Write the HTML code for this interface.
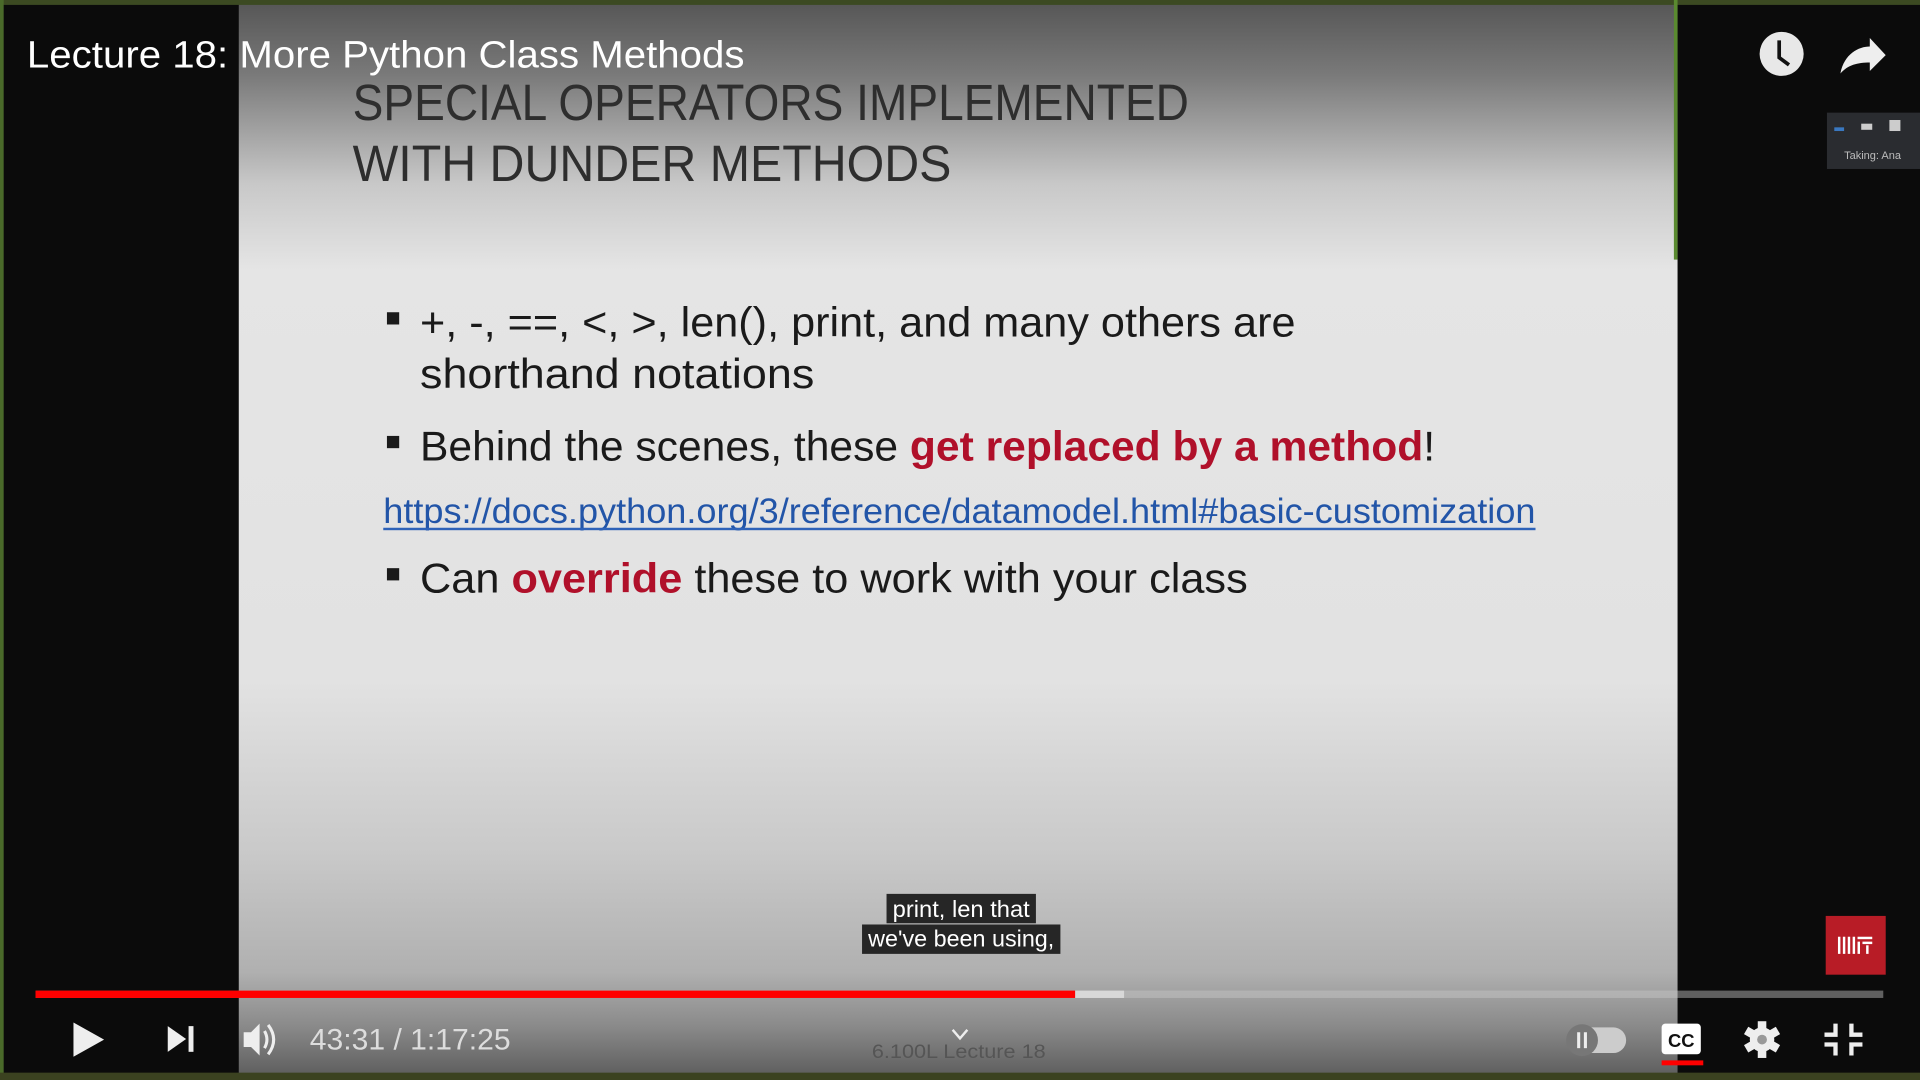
<!DOCTYPE html>
<html><head><meta charset="utf-8"><style>
html,body{margin:0;padding:0;background:#0b0b0b;width:1920px;height:1080px;overflow:hidden}
svg{display:block}
</style></head><body>
<svg width="1920" height="1080" viewBox="0 0 1568 882" xmlns="http://www.w3.org/2000/svg" font-family="Liberation Sans, sans-serif">
<defs>
<linearGradient id="sl" x1="0" y1="0" x2="0" y2="1">
<stop offset="0" stop-color="#555"/>
<stop offset="0.07" stop-color="#7a7a7a"/>
<stop offset="0.17" stop-color="#c8c8c8"/>
<stop offset="0.25" stop-color="#e5e5e5"/>
<stop offset="0.63" stop-color="#e2e2e2"/>
<stop offset="0.79" stop-color="#c9c9c9"/>
<stop offset="0.9" stop-color="#b0b0b0"/>
<stop offset="0.95" stop-color="#8a8a8a"/>
<stop offset="1" stop-color="#5a5a5a"/>
</linearGradient>
</defs>
<rect width="1568" height="882" fill="#0b0b0b"/>
<rect x="195" y="0" width="1175" height="882" fill="url(#sl)"/>
<rect x="0" y="0" width="1568" height="4" fill="#3c4a22"/>
<rect x="0" y="0" width="3" height="882" fill="#4a6a2a"/>
<rect x="0" y="876" width="1568" height="6" fill="#3b4220"/>
<rect x="1367" y="0" width="3" height="212" fill="#5a8a30"/>

<text x="22" y="55" font-size="31" fill="#fff" textLength="586" lengthAdjust="spacingAndGlyphs">Lecture 18: More Python Class Methods</text>

<g fill="#2e2e2e" font-size="42">
<text x="288" y="98" textLength="683" lengthAdjust="spacingAndGlyphs">SPECIAL OPERATORS IMPLEMENTED</text>
<text x="288" y="148" textLength="489" lengthAdjust="spacingAndGlyphs">WITH DUNDER METHODS</text>
</g>
<g fill="#1a1a1a" font-size="34">
<rect x="316" y="255" width="10" height="10"/>
<text x="343" y="275" textLength="715" lengthAdjust="spacingAndGlyphs">+, -, ==, &lt;, &gt;, len(), print, and many others are</text>
<text x="343" y="317" textLength="322" lengthAdjust="spacingAndGlyphs">shorthand notations</text>
<rect x="316" y="356" width="10" height="10"/>
<text x="343" y="376" textLength="829" lengthAdjust="spacingAndGlyphs">Behind the scenes, these <tspan fill="#b0102a" font-weight="bold">get replaced by a method</tspan>!</text>
<rect x="316" y="464" width="10" height="10"/>
<text x="343" y="484" textLength="676" lengthAdjust="spacingAndGlyphs">Can <tspan fill="#b0102a" font-weight="bold">override</tspan> these to work with your class</text>
</g>
<text x="313" y="427" font-size="29" fill="#2255a8" textLength="941" lengthAdjust="spacingAndGlyphs">https://docs.python.org/3/reference/datamodel.html#basic-customization</text>
<rect x="313" y="431" width="941" height="2" fill="#2e62b8"/>

<!-- subtitles -->
<rect x="724" y="730" width="122" height="24" fill="#262626"/>
<rect x="704" y="755" width="162" height="24" fill="#262626"/>
<text x="785" y="749" font-size="19" fill="#fff" text-anchor="middle" textLength="112" lengthAdjust="spacingAndGlyphs">print, len that</text>
<text x="785" y="773" font-size="19" fill="#fff" text-anchor="middle" textLength="152" lengthAdjust="spacingAndGlyphs">we've been using,</text>

<!-- MIT logo -->
<rect x="1491" y="748" width="49" height="48" fill="#b81c26"/>
<g fill="#fff"><rect x="1501" y="765" width="2" height="14"/><rect x="1505" y="765" width="2" height="14"/><rect x="1509" y="765" width="2" height="14"/><rect x="1513" y="765" width="2" height="14"/><rect x="1517" y="769" width="2" height="10"/><rect x="1521" y="769" width="8" height="2"/><rect x="1524" y="772" width="2" height="7"/><rect x="1517" y="765" width="12" height="2"/></g>

<!-- top right icons -->
<circle cx="1455" cy="44" r="18" fill="#e8e8e8"/>
<path d="M1453 33 V47 L1461 53" stroke="#111" stroke-width="3" fill="none"/>
<path d="M1503 60 C1506 44 1518 38 1527 38 V31 L1540 45 L1527 58 V51 C1517 51 1509 53 1503 60 Z" fill="#eee"/>
<rect x="1492" y="92" width="76" height="46" fill="#2a2c30"/>
<rect x="1498" y="104" width="8" height="3" fill="#3a78c0"/><rect x="1520" y="101" width="9" height="5" fill="#ccc"/><rect x="1543" y="98" width="9" height="9" fill="#ccc"/>
<text x="1506" y="130" font-size="9" fill="#bbb">Taking: Ana</text>

<!-- progress -->
<rect x="29" y="809" width="1509" height="6" fill="rgba(200,200,200,0.45)"/>
<rect x="878" y="809" width="40" height="6" fill="#d8d8d8"/>
<rect x="29" y="809" width="849" height="6" fill="#f00"/>

<!-- controls -->
<path d="M60 835 L85 849 L60 863 Z" fill="#eee"/>
<path d="M137 838 L152 848.5 L137 859 Z" fill="#eee"/><rect x="154" y="838" width="4" height="21" fill="#eee"/>
<path d="M199 843 H205 L212 836 V862 L205 855 H199 Z" fill="#eee"/>
<path d="M216 842 Q220 849 216 856" stroke="#eee" stroke-width="2.5" fill="none"/>
<path d="M219 837 Q228 849 219 861" stroke="#eee" stroke-width="2.5" fill="none"/>
<text x="253" y="857" font-size="24" fill="#ddd" textLength="164" lengthAdjust="spacingAndGlyphs">43:31 / 1:17:25</text>
<path d="M778 841 L784 848 L790 841" stroke="#eee" stroke-width="2" fill="none"/>
<text x="712" y="864" font-size="16" fill="#555" textLength="142" lengthAdjust="spacingAndGlyphs">6.100L Lecture 18</text>

<rect x="1282" y="839" width="46" height="21" rx="10.5" fill="#ccc"/>
<circle cx="1292" cy="849.5" r="13" fill="#777"/>
<rect x="1288" y="843" width="2.5" height="13" fill="#eee"/><rect x="1293.5" y="843" width="2.5" height="13" fill="#eee"/>
<rect x="1357" y="836" width="32" height="25" rx="3" fill="#fff"/>
<text x="1373" y="855" font-size="15" font-weight="bold" fill="#111" text-anchor="middle">CC</text>
<rect x="1357" y="866" width="34" height="4" fill="#f00"/>
<g transform="translate(1439 849)" fill="#eee">
<circle r="10"/>
<rect x="-3.5" y="-15" width="7" height="30"/>
<rect x="-3.5" y="-15" width="7" height="30" transform="rotate(60)"/>
<rect x="-3.5" y="-15" width="7" height="30" transform="rotate(120)"/>
<circle r="4" fill="#999"/>
</g>
<g stroke="#eee" stroke-width="3.5" fill="none">
<path d="M1499 836 V845 H1490"/><path d="M1512 836 V845 H1521"/>
<path d="M1490 853 H1499 V862"/><path d="M1521 853 H1512 V862"/>
</g>
</svg>
</body></html>
